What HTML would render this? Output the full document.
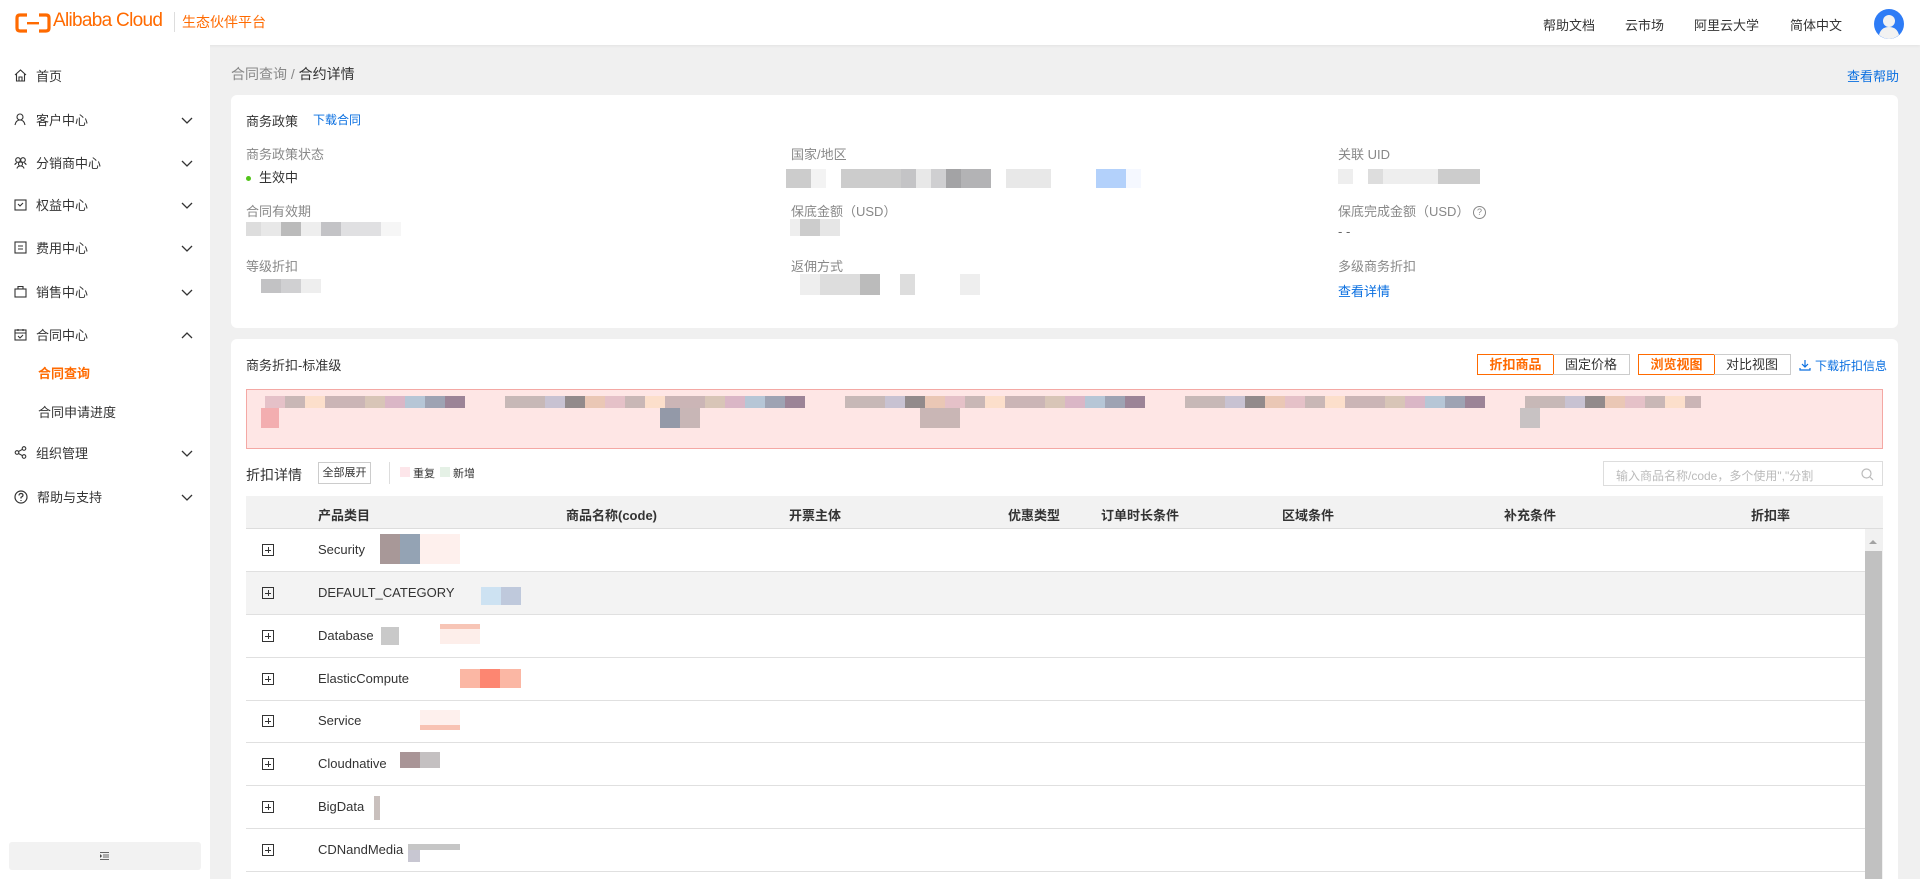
<!DOCTYPE html>
<html style="overflow:hidden;height:879px"><head><meta charset="utf-8"><style>
*{box-sizing:border-box;margin:0;padding:0}
body{width:1920px;height:879px;overflow:hidden;background:#f0f0f0;font-family:"Liberation Sans","Noto Sans CJK SC",sans-serif;font-size:13px;color:#333;position:relative}
.a{position:absolute}
.hdr{left:0;top:0;width:1920px;height:45px;background:#fff;box-shadow:0 1px 3px rgba(0,0,0,.06)}
.side{left:0;top:45px;width:210px;height:834px;background:#fff}
.mi{position:absolute;left:14px;font-size:13px;color:#333;display:flex;align-items:center}
.mi svg{margin-right:9px}
.chev{position:absolute;left:181px}
.card{background:#fff;border-radius:6px}
.lbl{color:#888;font-size:13px}
.blk{position:absolute;height:14px}
.th{position:absolute;top:505px;font-size:13px;color:#333;font-weight:bold}
.row{position:absolute;left:246px;width:1619px;height:43px;border-bottom:1px solid #e0e0e0}
.row .pl{position:absolute;left:16px;top:15px;width:12px;height:12px;border:1px solid #333}
.row .pl:before{content:"";position:absolute;left:2px;top:4.5px;width:6px;height:1px;background:#333}
.row .pl:after{content:"";position:absolute;left:4.5px;top:2px;width:1px;height:6px;background:#333}
.row .t{position:absolute;left:72px;top:13px;font-size:13px;color:#333}
.btn{position:absolute;top:354px;height:21px;border:1px solid #ccc;font-size:13px;line-height:19px;text-align:center}
.on{border-color:#ff6a00;color:#ff6a00;font-weight:bold}
</style></head><body>
<div class="a hdr">
 <svg class="a" style="left:15px;top:13px" width="36" height="20" viewBox="0 0 36 20"><path d="M12 2H5Q2 2 2 5V15Q2 18 5 18H12M24 2H31Q34 2 34 5V15Q34 18 31 18H24" stroke="#ff6a00" stroke-width="3.2" fill="none"/><rect x="12" y="9" width="12" height="2.4" fill="#ff6a00"/></svg>
 <div class="a" style="left:53px;top:10px;font-size:19px;color:#ff6a00;letter-spacing:-0.7px">Alibaba Cloud</div>
 <div class="a" style="left:174px;top:12px;width:1px;height:20px;background:#ddd"></div>
 <div class="a" style="left:182px;top:12px;font-size:14px;color:#ff6a00">生态伙伴平台</div>
 <div class="a" style="left:1543px;top:15px">帮助文档</div>
 <div class="a" style="left:1625px;top:15px">云市场</div>
 <div class="a" style="left:1694px;top:15px">阿里云大学</div>
 <div class="a" style="left:1790px;top:15px">简体中文</div>
 <svg class="a" style="left:1874px;top:9px" width="30" height="30" viewBox="0 0 30 30"><circle cx="15" cy="15" r="15" fill="#2e7cf6"/><circle cx="15" cy="12" r="6" fill="#f2f2f2"/><path d="M5 26Q7 18 15 18Q23 18 25 26Q20 30 15 30Q10 30 5 26Z" fill="#f2f2f2"/></svg>
</div>
<div class="a side">
 <div class="mi" style="top:21px"><svg width="13" height="13" viewBox="0 0 13 13" fill="none" stroke="#333" stroke-width="1.1"><path d="M1 6L6.5 1 12 6M2.5 5V12H10.5V5M5 12V8H8V12"/></svg>首页</div>
 <div class="mi" style="top:65px"><svg width="13" height="13" viewBox="0 0 13 13" fill="none" stroke="#333" stroke-width="1.1"><circle cx="6" cy="4" r="3"/><path d="M1 12Q2 7 6 7Q10 7 11 12"/></svg>客户中心</div>
 <div class="mi" style="top:108px"><svg width="13" height="13" viewBox="0 0 13 13" fill="none" stroke="#333" stroke-width="1.1"><circle cx="4" cy="4" r="2.3"/><circle cx="9" cy="4" r="2.3"/><circle cx="6.5" cy="8" r="2"/><path d="M1 9Q1 7 3 7M12 9Q12 7 10 7M3 12.5Q3.5 10 6.5 10Q9.5 10 10 12.5"/></svg>分销商中心</div>
 <div class="mi" style="top:150px"><svg width="13" height="13" viewBox="0 0 13 13" fill="none" stroke="#333" stroke-width="1.1"><rect x="1" y="2" width="11" height="10"/><path d="M4 6L6 8 9 5"/></svg>权益中心</div>
 <div class="mi" style="top:193px"><svg width="13" height="13" viewBox="0 0 13 13" fill="none" stroke="#333" stroke-width="1.1"><rect x="1" y="1" width="11" height="11"/><path d="M4 5H9M4 8H9"/></svg>费用中心</div>
 <div class="mi" style="top:237px"><svg width="13" height="13" viewBox="0 0 13 13" fill="none" stroke="#333" stroke-width="1.1"><rect x="1" y="4" width="11" height="8"/><path d="M4 4V1.5H9V4"/></svg>销售中心</div>
 <div class="mi" style="top:280px"><svg width="13" height="13" viewBox="0 0 13 13" fill="none" stroke="#333" stroke-width="1.1"><rect x="1" y="2" width="11" height="10"/><path d="M1 5H12M4 1V3M9 1V3M4 8L6 10 9 7"/></svg>合同中心</div>
 <div class="a" style="left:38px;top:318px;color:#ff6a00;font-weight:bold">合同查询</div>
 <div class="a" style="left:38px;top:357px">合同申请进度</div>
 <div class="mi" style="top:398px"><svg width="13" height="13" viewBox="0 0 13 13" fill="none" stroke="#333" stroke-width="1.1"><circle cx="3" cy="6.5" r="1.8"/><circle cx="10" cy="2.5" r="1.8"/><circle cx="10" cy="10.5" r="1.8"/><path d="M4.5 5.5L8.5 3.3M4.5 7.5L8.5 9.7"/></svg>组织管理</div>
 <div class="mi" style="top:442px"><svg width="14" height="14" viewBox="0 0 14 14" fill="none" stroke="#333" stroke-width="1.2"><circle cx="7" cy="7" r="6"/><path d="M5 5.5Q5 3.5 7 3.5Q9 3.5 9 5.3Q9 6.5 7 7.3V8.5M7 10V11"/></svg>帮助与支持</div>
 <svg class="a chev" style="top:72px" width="12" height="8" viewBox="0 0 12 8"><path d="M1 1L6 6 11 1" stroke="#333" fill="none" stroke-width="1.3"/></svg>
 <svg class="a chev" style="top:115px" width="12" height="8" viewBox="0 0 12 8"><path d="M1 1L6 6 11 1" stroke="#333" fill="none" stroke-width="1.3"/></svg>
 <svg class="a chev" style="top:157px" width="12" height="8" viewBox="0 0 12 8"><path d="M1 1L6 6 11 1" stroke="#333" fill="none" stroke-width="1.3"/></svg>
 <svg class="a chev" style="top:200px" width="12" height="8" viewBox="0 0 12 8"><path d="M1 1L6 6 11 1" stroke="#333" fill="none" stroke-width="1.3"/></svg>
 <svg class="a chev" style="top:244px" width="12" height="8" viewBox="0 0 12 8"><path d="M1 1L6 6 11 1" stroke="#333" fill="none" stroke-width="1.3"/></svg>
 <svg class="a chev" style="top:286px" width="12" height="8" viewBox="0 0 12 8"><path d="M1 7L6 2 11 7" stroke="#333" fill="none" stroke-width="1.3"/></svg>
 <svg class="a chev" style="top:405px" width="12" height="8" viewBox="0 0 12 8"><path d="M1 1L6 6 11 1" stroke="#333" fill="none" stroke-width="1.3"/></svg>
 <svg class="a chev" style="top:449px" width="12" height="8" viewBox="0 0 12 8"><path d="M1 1L6 6 11 1" stroke="#333" fill="none" stroke-width="1.3"/></svg>
 <div class="a" style="left:9px;top:797px;width:192px;height:28px;background:#f2f2f2;border-radius:3px"><svg class="a" style="left:91px;top:10px" width="9" height="8" viewBox="0 0 9 8" stroke="#666" stroke-width="1"><path d="M0 .5H9M3 3H9M3 5H9M0 7.5H9M0 2.5L1.5 4 0 5.5"/></svg></div>
</div>

<div class="a" style="left:231px;top:64px;font-size:14px;color:#888">合同查询 / <span style="color:#333">合约详情</span></div>
<div class="a" style="left:1847px;top:66px;color:#0a6fe0">查看帮助</div>

<div class="a card" style="left:231px;top:95px;width:1667px;height:233px"></div>
<div class="a" style="left:246px;top:111px">商务政策</div>
<div class="a" style="left:313px;top:111px;color:#0a6fe0;font-size:12px">下载合同</div>
<div class="a lbl" style="left:246px;top:144px">商务政策状态</div>
<div class="a" style="left:246px;top:167px"><span style="display:inline-block;width:5px;height:5px;border-radius:50%;background:#52c41a;vertical-align:middle;margin-right:8px"></span>生效中</div>
<div class="a lbl" style="left:246px;top:201px">合同有效期</div>
<div class="blk" style="left:246px;top:222px;width:155px;background:linear-gradient(90deg,#ddd 0 15px,#e8e8e8 15px 35px,#bbb 35px 55px,#eee 55px 75px,#c3c3c6 75px 95px,#e0e0e2 95px 135px,#f6f6f6 135px)"></div>
<div class="a lbl" style="left:246px;top:256px">等级折扣</div>
<div class="blk" style="left:246px;top:279px;width:75px;background:linear-gradient(90deg,#fff 0 15px,#c2c2c4 15px 35px,#d0d0d2 35px 55px,#eee 55px)"></div>

<div class="a lbl" style="left:791px;top:144px">国家/地区</div>
<div class="blk" style="left:786px;top:169px;width:455px;height:19px;background:linear-gradient(90deg,#ccc 0 25px,#f3f3f3 25px 40px,#fff 40px 55px,#ccc 55px 115px,#c4c4c6 115px 130px,#e8e8e8 130px 145px,#cfcfd1 145px 160px,#a3a3a5 160px 175px,#b3b3b5 175px 205px,#fff 205px 220px,#e8e8e8 220px 265px,#fff 265px 310px,#b3d1fb 310px 340px,#f5f8ff 340px 355px,#fff 355px)"></div>
<div class="a lbl" style="left:791px;top:201px">保底金额（USD）</div>
<div class="blk" style="left:790px;top:219px;width:50px;height:17px;background:linear-gradient(90deg,#eee 0 10px,#ccc 10px 30px,#e6e6e6 30px)"></div>
<div class="a lbl" style="left:791px;top:256px">返佣方式</div>
<div class="blk" style="left:790px;top:274px;width:190px;height:21px;background:linear-gradient(90deg,#fff 0 10px,#eee 10px 30px,#ddd 30px 70px,#bbb 70px 90px,#fff 90px 110px,#ddd 110px 125px,#fff 125px 170px,#eee 170px 190px)"></div>

<div class="a lbl" style="left:1338px;top:144px">关联 UID</div>
<div class="blk" style="left:1338px;top:169px;width:142px;height:15px;background:linear-gradient(90deg,#eee 0 15px,#fff 15px 30px,#ddd 30px 45px,#eee 45px 100px,#ccc 100px)"></div>
<div class="a lbl" style="left:1338px;top:201px">保底完成金额（USD） <span style="display:inline-block;width:13px;height:13px;border:1px solid #888;border-radius:50%;font-size:9px;text-align:center;line-height:11px;vertical-align:middle">?</span></div>
<div class="a" style="left:1338px;top:224px;color:#666">- -</div>
<div class="a lbl" style="left:1338px;top:256px">多级商务折扣</div>
<div class="a" style="left:1338px;top:281px;color:#0a6fe0">查看详情</div>

<div class="a card" style="left:231px;top:339px;width:1667px;height:540px;border-radius:6px 6px 0 0"></div>
<div class="a" style="left:246px;top:355px">商务折扣-标准级</div>
<div class="btn on" style="left:1477px;width:77px">折扣商品</div>
<div class="btn" style="left:1553px;width:77px;border-left:none">固定价格</div>
<div class="btn on" style="left:1638px;width:77px">浏览视图</div>
<div class="btn" style="left:1714px;width:77px;border-left:none">对比视图</div>
<div class="a" style="left:1799px;top:357px;color:#0a6fe0;font-size:12px"><svg width="12" height="12" viewBox="0 0 12 12" style="vertical-align:-1px;margin-right:4px" fill="none" stroke="#0a6fe0" stroke-width="1.2"><path d="M6 1V8M3 5L6 8 9 5M1 9V11H11V9"/></svg>下载折扣信息</div>

<div class="a" style="left:246px;top:389px;width:1637px;height:60px;background:#fee6e5;border:1px solid #f4a8a4"></div>
<div class="a" style="left:265px;top:396px;width:1436px;height:12px;background:repeating-linear-gradient(90deg,#e5c1c8 0 20px,#c9b7b6 20px 40px,#fcdfcb 40px 60px,#cbb5b6 60px 100px,#d8c5b7 100px 120px,#dab6c6 120px 140px,#b6c6d6 140px 160px,#9ea3b3 160px 180px,#9c8497 180px 200px,#fee6e5 200px 240px,#c7b8b7 240px 280px,#c8c2d2 280px 300px,#928a8b 300px 320px,#eac7b5 320px 340px)"></div>
<div class="a" style="left:261px;top:408px;width:18px;height:20px;background:#f3aeb0"></div>
<div class="a" style="left:660px;top:408px;width:20px;height:20px;background:#9399a8"></div>
<div class="a" style="left:680px;top:408px;width:20px;height:20px;background:#c8b6b6"></div>
<div class="a" style="left:920px;top:408px;width:40px;height:20px;background:#c9b6b5"></div>
<div class="a" style="left:1520px;top:408px;width:20px;height:20px;background:#c8c2c3"></div>

<div class="a" style="left:246px;top:465px;font-size:14px">折扣详情</div>
<div class="a" style="left:318px;top:462px;width:53px;height:22px;border:1px solid #ccc;font-size:11px;text-align:center;line-height:20px">全部展开</div>
<div class="a" style="left:389px;top:462px;width:1px;height:22px;background:#ddd"></div>
<div class="a" style="left:400px;top:467px;width:10px;height:10px;background:#fde6ea"></div>
<div class="a" style="left:413px;top:465px;font-size:11px">重复</div>
<div class="a" style="left:440px;top:467px;width:10px;height:10px;background:#e5f1e6"></div>
<div class="a" style="left:453px;top:465px;font-size:11px">新增</div>
<div class="a" style="left:1603px;top:461px;width:280px;height:25px;border:1px solid #ddd;color:#bbb;padding:5px 12px;font-size:12px">输入商品名称/code，多个使用","分割
 <svg class="a" style="right:8px;top:6px" width="13" height="13" viewBox="0 0 13 13" fill="none" stroke="#bbb" stroke-width="1.2"><circle cx="5.5" cy="5.5" r="4.5"/><path d="M9 9L12 12"/></svg></div>

<div class="a" style="left:246px;top:496px;width:1637px;height:33px;background:#f2f2f2;border-bottom:1px solid #ddd"></div>
<div class="th" style="left:318px">产品类目</div>
<div class="th" style="left:566px">商品名称(code)</div>
<div class="th" style="left:789px">开票主体</div>
<div class="th" style="left:1008px">优惠类型</div>
<div class="th" style="left:1101px">订单时长条件</div>
<div class="th" style="left:1282px">区域条件</div>
<div class="th" style="left:1504px">补充条件</div>
<div class="th" style="left:1751px">折扣率</div>

<div class="row" style="top:529px"><i class="pl"></i><span class="t">Security</span><div class="a" style="left:134px;top:5px;width:80px;height:30px;background:linear-gradient(90deg,#a89898 0 20px,#94a3b4 20px 40px,#fef0ed 40px)"></div></div>
<div class="row" style="top:572px;background:#f3f3f3"><i class="pl"></i><span class="t">DEFAULT_CATEGORY</span><div class="a" style="left:235px;top:15px;width:40px;height:18px;background:linear-gradient(90deg,#cde2f2 0 20px,#bfc9dc 20px)"></div></div>
<div class="row" style="top:615px"><i class="pl"></i><span class="t">Database</span><div class="a" style="left:135px;top:12px;width:18px;height:18px;background:#c9c9c9"></div><div class="a" style="left:194px;top:9px;width:40px;height:20px;background:linear-gradient(#f7c5b6 0 5px,#fdeeea 5px)"></div></div>
<div class="row" style="top:658px"><i class="pl"></i><span class="t">ElasticCompute</span><div class="a" style="left:214px;top:11px;width:61px;height:19px;background:linear-gradient(90deg,#fbb7a4 0 20px,#fd8671 20px 40px,#fbb7a4 40px)"></div></div>
<div class="row" style="top:700px"><i class="pl"></i><span class="t">Service</span><div class="a" style="left:174px;top:10px;width:40px;height:20px;background:linear-gradient(#fef0ed 0 15px,#f8c2b3 15px)"></div></div>
<div class="row" style="top:743px"><i class="pl"></i><span class="t">Cloudnative</span><div class="a" style="left:154px;top:9px;width:40px;height:16px;background:linear-gradient(90deg,#a99597 0 20px,#c4c0c1 20px)"></div></div>
<div class="row" style="top:786px"><i class="pl"></i><span class="t">BigData</span><div class="a" style="left:128px;top:10px;width:6px;height:24px;background:#c9c0bd"></div></div>
<div class="row" style="top:829px"><i class="pl"></i><span class="t">CDNandMedia</span><div class="a" style="left:162px;top:15px;width:52px;height:6px;background:#c6c6c6"></div><div class="a" style="left:162px;top:21px;width:12px;height:12px;background:#c8c7d2"></div></div>

<div class="a" style="left:1865px;top:529px;width:18px;height:350px;background:#f1f1f1"></div>
<div class="a" style="left:1869px;top:540px;width:0;height:0;border-left:4px solid transparent;border-right:4px solid transparent;border-bottom:4px solid #a3a3a3"></div>
<div class="a" style="left:1865px;top:551px;width:17px;height:328px;background:#c1c1c1"></div>
</body></html>
